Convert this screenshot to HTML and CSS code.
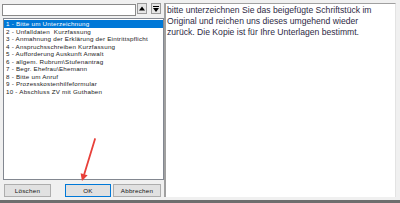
FILE: index.html
```html
<!DOCTYPE html>
<html lang="de">
<head>
<meta charset="utf-8">
<link rel="stylesheet" href="styles.css">
</head>
<body>
<div class="window">
  <div class="left">
    <div class="toprow">
      <div class="search"></div>
      <div class="spin">
        <svg width="8" height="8" viewBox="0 0 8 8"><polygon points="4,1.5 7,5.5 1,5.5" fill="#000"/></svg>
      </div>
      <div class="spin spin-down">
        <svg width="8" height="8" viewBox="0 0 8 8"><rect x="1" y="1" width="6" height="1" fill="#000"/><polygon points="1,3 7,3 4,7" fill="#000"/></svg>
      </div>
    </div>
    <ul class="list">
      <li class="item selected">1 - Bitte um Unterzeichnung</li>
      <li class="item">2 - Unfalldaten&nbsp; Kurzfassung</li>
      <li class="item">3 - Anmahnung der Erklärung der Eintrittspflicht</li>
      <li class="item">4 - Anspruchsschreiben Kurzfassung</li>
      <li class="item">5 - Aufforderung Auskunft Anwalt</li>
      <li class="item">6 - allgem. Rubrum\Stufenantrag</li>
      <li class="item">7 - Begr. Ehefrau\Ehemann</li>
      <li class="item">8 - Bitte um Anruf</li>
      <li class="item">9 - Prozesskostenhilfeformular</li>
      <li class="item">10 - Abschluss ZV mit Guthaben</li>
    </ul>
    <div class="buttons">
      <button class="btn btn-delete">Löschen</button>
      <button class="btn btn-ok">OK</button>
      <button class="btn btn-cancel">Abbrechen</button>
    </div>
  </div>
  <div class="right">
    <p class="letter">bitte unterzeichnen Sie das beigefügte Schriftstück im<br>Original und reichen uns dieses umgehend wieder<br>zurück. Die Kopie ist für Ihre Unterlagen bestimmt.</p>
  </div>
</div>
<div class="bottombar"></div>
<svg class="arrow" width="400" height="203" viewBox="0 0 400 203">
  <line x1="95" y1="139" x2="84.3" y2="174" stroke="#e8403a" stroke-width="1.8" stroke-linecap="round"/>
  <polygon points="82,181 87.6,175.3 80.6,173.2" fill="#e8403a"/>
</svg>
</body>
</html>
```
FILE: styles.css
```css
html, body {
  margin: 0;
  padding: 0;
}
body {
  width: 400px;
  height: 203px;
  background: #f0f0f0;
  font-family: "Liberation Sans", Arial, sans-serif;
  overflow: hidden;
  position: relative;
}
.window {
  display: flex;
  height: 200px;
  padding: 3px 4px 0 2px;
  box-sizing: border-box;
}
.left {
  width: 162px;
  display: flex;
  flex-direction: column;
}
.toprow {
  display: flex;
  align-items: flex-start;
  height: 12px;
}
.search {
  width: 134px;
  height: 12px;
  margin-top: 1px;
  box-sizing: border-box;
  border: 1px solid #8a8a8a;
  background: #fff;
}
.spin {
  width: 10px;
  height: 11px;
  margin-left: 1px;
  box-sizing: border-box;
  border: 1px solid #9a9a9a;
  background: #e6e6e6;
  display: flex;
  align-items: center;
  justify-content: center;
}
.spin-down {
  margin-left: 4px;
}
.list {
  list-style: none;
  margin: 3px 0 0 1px;
  padding: 1px 0 0 0;
  width: 161px;
  height: 162px;
  box-sizing: border-box;
  border: 1px solid #828790;
  background: #fff;
  font-size: 6.25px;
  letter-spacing: 0.22px;
  color: #222;
}
.item {
  height: 7.55px;
  line-height: 7.55px;
  padding-left: 2px;
  white-space: nowrap;
}
.selected {
  background: #0078d7;
  color: #fff;
}
.buttons {
  display: flex;
  margin-top: 4px;
}
.btn {
  height: 13px;
  box-sizing: border-box;
  border: 1px solid #adadad;
  background: #e1e1e1;
  font-family: "Liberation Sans", Arial, sans-serif;
  font-size: 6.25px;
  letter-spacing: 0.25px;
  color: #111;
  padding: 0;
  margin: 0;
}
.btn-delete {
  width: 47px;
  margin-left: 2px;
}
.btn-ok {
  width: 46px;
  margin-left: 14px;
  border-color: #0078d7;
}
.btn-cancel {
  width: 48px;
  margin-left: 2px;
}
.right {
  width: 232px;
  height: 194px;
  box-sizing: border-box;
  border-left: 2px solid #a0a0a0;
  border-top: 1px solid #a0a0a0;
  border-right: 1px solid #e3e3e3;
  background: #fff;
}
.letter {
  margin: 0;
  padding: 1px 1px;
  font-size: 8.6px;
  line-height: 10.9px;
  color: #2e2a45;
  white-space: nowrap;
}
.bottombar {
  height: 3px;
  background: #6e6e6e;
}
.arrow {
  position: absolute;
  left: 0;
  top: 0;
  pointer-events: none;
}
```
